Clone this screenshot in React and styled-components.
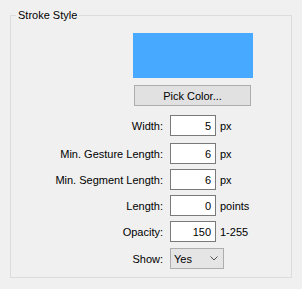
import React from "react";
import styled, { createGlobalStyle } from "styled-components";

const Global = createGlobalStyle`
  html, body {
    margin: 0;
    padding: 0;
    background: #f0f0f0;
  }
  body {
    font-family: "Liberation Sans", Arial, sans-serif;
    font-size: 11px;
    color: #000;
  }
  #root {
    padding-top: 9px;
  }
`;

const Group = styled.fieldset`
  box-sizing: border-box;
  width: 282px;
  margin: 0 0 0 10px;
  padding: 11px 0 8px 0;
  border: 1px solid #dcdcdc;
  min-inline-size: 0;
`;

const Legend = styled.legend`
  margin-left: 5px;
  padding: 0 2px;
  font-size: 11px;
  line-height: 13px;
`;

const Top = styled.div`
  display: flex;
  flex-direction: column;
  align-items: flex-start;
`;

const Swatch = styled.div`
  width: 120px;
  height: 45px;
  margin-left: 122px;
  background: ${(p) => p.$color};
`;

const PickButton = styled.button`
  box-sizing: border-box;
  width: 117px;
  height: 21px;
  margin: 7px 0 0 123px;
  padding: 0;
  background: #e1e1e1;
  border: 1px solid #adadad;
  font-family: inherit;
  font-size: 11px;
  color: #000;
`;

const Form = styled.div`
  display: flex;
  flex-direction: column;
  gap: 5px;
  margin-top: 9px;
`;

const Row = styled.div`
  display: flex;
  align-items: center;
  height: 21px;
  margin-top: ${(p) => p.$extra || 0}px;
`;

const Label = styled.div`
  width: 152px;
  margin-right: 7px;
  text-align: right;
  white-space: nowrap;
`;

const Field = styled.div`
  box-sizing: border-box;
  width: 46px;
  height: 21px;
  background: #fff;
  border: 1px solid #7a7a7a;
  padding-right: 4px;
  display: flex;
  align-items: center;
  justify-content: flex-end;
`;

const Unit = styled.div`
  margin-left: 4px;
  white-space: nowrap;
`;

const Select = styled.div`
  box-sizing: border-box;
  width: 54px;
  height: 21px;
  background: #e5e5e5;
  border: 1px solid #adadad;
  display: flex;
  align-items: center;
  justify-content: space-between;
  padding: 0 5px 0 3px;
`;

const rows = [
  { label: "Width:", value: "5", unit: "px" },
  { label: "Min. Gesture Length:", value: "6", unit: "px", extra: 2 },
  { label: "Min. Segment Length:", value: "6", unit: "px" },
  { label: "Length:", value: "0", unit: "points" },
  { label: "Opacity:", value: "150", unit: "1-255" },
];

export default function App() {
  return (
    <>
      <Global />
      <Group>
        <Legend>Stroke Style</Legend>
        <Top>
          <Swatch $color="#47a9ff" />
          <PickButton>Pick Color...</PickButton>
        </Top>
        <Form>
          {rows.map((r) => (
            <Row key={r.label} $extra={r.extra}>
              <Label>{r.label}</Label>
              <Field>{r.value}</Field>
              <Unit>{r.unit}</Unit>
            </Row>
          ))}
          <Row $extra={1}>
            <Label>Show:</Label>
            <Select>
              <span>Yes</span>
              <svg width="8" height="5" viewBox="0 0 8 5">
                <path d="M0.5 0.5 L4 4 L7.5 0.5" fill="none" stroke="#505050" strokeWidth="1" />
              </svg>
            </Select>
          </Row>
        </Form>
      </Group>
    </>
  );
}
